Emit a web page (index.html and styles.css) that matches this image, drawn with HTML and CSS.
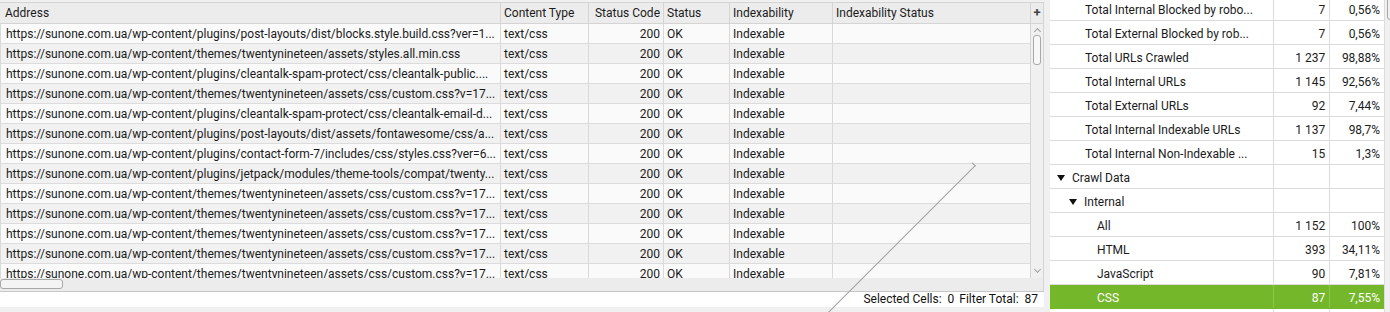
FILE: index.html
```html
<!DOCTYPE html>
<html lang="en">
<head>
    <meta charset="UTF-8">
    <title>Crawl - CSS</title>
    <link rel="stylesheet" href="styles.css">
</head>
<body>
    <div class="left">
        <div class="head-row">
            <div class="cols head">
                <div class="c c-addr">Address</div>
                <div class="c c-type">Content Type</div>
                <div class="c c-code">Status Code</div>
                <div class="c c-status">Status</div>
                <div class="c c-idx">Indexability</div>
                <div class="c c-idxs">Indexability Status</div>
            </div>
            <div class="plus">+</div>
        </div>

        <div class="body-row">
            <div class="rows" id="rows"></div>
            <div class="vscroll">
                <span class="arrow up"></span>
                <div class="vthumb"></div>
                <span class="arrow down"></span>
            </div>
        </div>

        <div class="hscroll-row">
            <div class="hscroll">
                <div class="hthumb"></div>
                <span class="arrow right"></span>
            </div>
            <div class="corner"></div>
        </div>

        <div class="status-bar">
            <span>Selected Cells:&nbsp; 0</span>
            <span>Filter Total:&nbsp; 87</span>
        </div>
    </div>

    <div class="splitter"></div>

    <div class="right">
        <div class="tree">
            <div class="tree-inner" id="tree"></div>
        </div>
        <div class="rscroll"><div class="rthumb"></div></div>
    </div>

    <script>
        const urls = [
            'https://sunone.com.ua/wp-content/plugins/post-layouts/dist/blocks.style.build.css?ver=1...',
            'https://sunone.com.ua/wp-content/themes/twentynineteen/assets/styles.all.min.css',
            'https://sunone.com.ua/wp-content/plugins/cleantalk-spam-protect/css/cleantalk-public....',
            'https://sunone.com.ua/wp-content/themes/twentynineteen/assets/css/custom.css?v=17...',
            'https://sunone.com.ua/wp-content/plugins/cleantalk-spam-protect/css/cleantalk-email-d...',
            'https://sunone.com.ua/wp-content/plugins/post-layouts/dist/assets/fontawesome/css/a...',
            'https://sunone.com.ua/wp-content/plugins/contact-form-7/includes/css/styles.css?ver=6...',
            'https://sunone.com.ua/wp-content/plugins/jetpack/modules/theme-tools/compat/twenty...',
            'https://sunone.com.ua/wp-content/themes/twentynineteen/assets/css/custom.css?v=17...',
            'https://sunone.com.ua/wp-content/themes/twentynineteen/assets/css/custom.css?v=17...',
            'https://sunone.com.ua/wp-content/themes/twentynineteen/assets/css/custom.css?v=17...',
            'https://sunone.com.ua/wp-content/themes/twentynineteen/assets/css/custom.css?v=17...',
            'https://sunone.com.ua/wp-content/themes/twentynineteen/assets/css/custom.css?v=17...'
        ];

        const rows = document.getElementById('rows');
        urls.forEach(function(url, i) {
            const row = document.createElement('div');
            row.className = 'cols row' + (i % 2 ? ' alt' : '');
            row.innerHTML =
                '<div class="c c-addr">' + url + '</div>' +
                '<div class="c c-type">text/css</div>' +
                '<div class="c c-code">200</div>' +
                '<div class="c c-status">OK</div>' +
                '<div class="c c-idx">Indexable</div>' +
                '<div class="c c-idxs"></div>';
            rows.appendChild(row);
        });

        // level: 0 = section, 1 = sub section, 2 = item, 3 = nested item
        const tree = [
            { label: 'Total Internal Blocked by robo...', n: '7', p: '0,56%', level: 2 },
            { label: 'Total External Blocked by rob...', n: '7', p: '0,56%', level: 2 },
            { label: 'Total URLs Crawled', n: '1 237', p: '98,88%', level: 2 },
            { label: 'Total Internal URLs', n: '1 145', p: '92,56%', level: 2 },
            { label: 'Total External URLs', n: '92', p: '7,44%', level: 2 },
            { label: 'Total Internal Indexable URLs', n: '1 137', p: '98,7%', level: 2 },
            { label: 'Total Internal Non-Indexable ...', n: '15', p: '1,3%', level: 2 },
            { label: 'Crawl Data', n: '', p: '', level: 0 },
            { label: 'Internal', n: '', p: '', level: 1 },
            { label: 'All', n: '1 152', p: '100%', level: 3 },
            { label: 'HTML', n: '393', p: '34,11%', level: 3 },
            { label: 'JavaScript', n: '90', p: '7,81%', level: 3 },
            { label: 'CSS', n: '87', p: '7,55%', level: 3, selected: true },
            { label: '', n: '', p: '', level: 3 }
        ];

        const caret = '<svg class="caret" width="8" height="6" viewBox="0 0 8 6"><polygon points="0,0 8,0 4,6" fill="#111"/></svg>';
        const treeEl = document.getElementById('tree');
        tree.forEach(function(item) {
            const row = document.createElement('div');
            row.className = 'trow lvl' + item.level + (item.selected ? ' selected' : '');
            const toggle = item.level < 2 ? caret : '';
            row.innerHTML =
                '<div class="t-label">' + toggle + '<span>' + item.label + '</span></div>' +
                '<div class="t-num">' + item.n + '</div>' +
                '<div class="t-pct">' + item.p + '</div>';
            treeEl.appendChild(row);
        });
    </script>
</body>
</html>
```

FILE: styles.css
```css
html {
    overflow: hidden;
}

body {
    margin: 0;
    width: 1390px;
    height: 312px;
    overflow: hidden;
    display: flex;
    background: #f0f0f0;
    font-family: Roboto, "Liberation Sans", sans-serif;
    font-size: 12px;
    color: #1b1b1b;
}

/* left grid */

.left {
    width: 1044px;
    display: flex;
    flex-direction: column;
    padding-top: 2px;
}

.head-row {
    display: flex;
    height: 20px;
    border-top: 1px solid #d4d4d4;
    border-bottom: 1px solid #d4d4d4;
    background: #ececec;
}

.cols {
    display: flex;
    width: 1030px;
    flex-shrink: 0;
}

.c {
    box-sizing: border-box;
    padding: 1px 3px 0;
    border-right: 1px solid #d9d9d9;
    white-space: nowrap;
    overflow: hidden;
    line-height: 19px;
}

.head .c {
    border-right-color: #d4d4d4;
}

.c-addr { width: 501px; padding-left: 5px; border-left: 1px solid #d9d9d9; }
.c-type { width: 88px; }
.c-code { width: 75px; text-align: right; }
.c-status { width: 66px; }
.c-idx { width: 103px; }
.c-idxs { width: 197px; border-right: none; }

.head .c-addr { border-left: none; }

.plus {
    width: 14px;
    box-sizing: border-box;
    border-left: 1px solid #d4d4d4;
    border-right: 1px solid #d4d4d4;
    text-align: center;
    font-weight: bold;
    font-size: 13px;
    line-height: 20px;
    color: #444;
}

.body-row {
    display: flex;
    height: 254px;
}

.rows {
    width: 1030px;
    height: 254px;
    overflow: hidden;
}

.row {
    height: 20px;
    box-sizing: border-box;
    border-bottom: 1px solid #dcdcdc;
    background: #fafafa;
}

.row.alt {
    background: #f1f1f1;
}

.vscroll {
    width: 14px;
    box-sizing: border-box;
    border-left: 1px solid #d4d4d4;
    border-right: 1px solid #d4d4d4;
    background: #f0f0f0;
    position: relative;
}

.vthumb {
    position: absolute;
    left: 2px;
    top: 11px;
    width: 8px;
    height: 30px;
    box-sizing: border-box;
    border: 1px solid #a8a8a8;
    border-radius: 3px;
    background: #f7f7f7;
}

.arrow {
    position: absolute;
    width: 4px;
    height: 4px;
    border-left: 1px solid #a0a0a0;
    border-top: 1px solid #a0a0a0;
}

.arrow.up { left: 4px; top: 5px; transform: rotate(45deg); }
.arrow.down { left: 4px; bottom: 6px; transform: rotate(225deg); }
.arrow.right { right: 6px; top: 4px; transform: rotate(135deg); }

.hscroll-row {
    display: flex;
    height: 13px;
    border-bottom: 1px solid #c8c8c8;
}

.hscroll {
    width: 1030px;
    background: #ececec;
    position: relative;
}

.hthumb {
    position: absolute;
    left: 0;
    top: 1px;
    width: 63px;
    height: 10px;
    box-sizing: border-box;
    border: 1px solid #a8a8a8;
    border-radius: 3px;
    background: #f4f4f4;
}

.corner {
    width: 14px;
    background: #ececec;
    box-sizing: border-box;
    border-right: 1px solid #d4d4d4;
}

.status-bar {
    height: 15px;
    background: #fff;
    display: flex;
    justify-content: flex-end;
    gap: 5px;
    padding-right: 6px;
    line-height: 15px;
    color: #111;
}

/* splitter */

.splitter {
    width: 6px;
}

/* right tree */

.right {
    width: 340px;
    display: flex;
}

.tree {
    width: 335px;
    overflow: hidden;
    background: #fff;
}

.tree-inner {
    margin-top: -3px;
}

.trow {
    display: flex;
    height: 24px;
    box-sizing: border-box;
    border-bottom: 1px solid #dcdcdc;
    line-height: 22px;
}

.trow > div {
    box-sizing: border-box;
    padding-top: 2px;
    white-space: nowrap;
    overflow: hidden;
}

.t-label {
    width: 225px;
    border-right: 1px solid #dcdcdc;
    display: flex;
    align-items: center;
}

.t-num {
    width: 56px;
    border-right: 1px solid #dcdcdc;
    text-align: right;
    padding-right: 4px;
}

.t-pct {
    width: 54px;
    text-align: right;
    padding-right: 4px;
}

.lvl0 .t-label { padding-left: 7px; }
.lvl1 .t-label { padding-left: 19px; }
.lvl2 .t-label { padding-left: 35px; }
.lvl3 .t-label { padding-left: 47px; }

.caret {
    margin-right: 7px;
}

.trow.selected {
    background: #75b72b;
    color: #fff;
    border-bottom-color: #75b72b;
}

.trow.selected .t-label,
.trow.selected .t-num {
    border-right-color: #8cc84a;
}

.rscroll {
    width: 5px;
    background: #f0f0f0;
    border-left: 1px solid #dcdcdc;
    position: relative;
    overflow: hidden;
}

.rthumb {
    position: absolute;
    left: 2px;
    top: -2px;
    width: 6px;
    height: 20px;
    border: 1px solid #a8a8a8;
    border-radius: 3px;
}
```
